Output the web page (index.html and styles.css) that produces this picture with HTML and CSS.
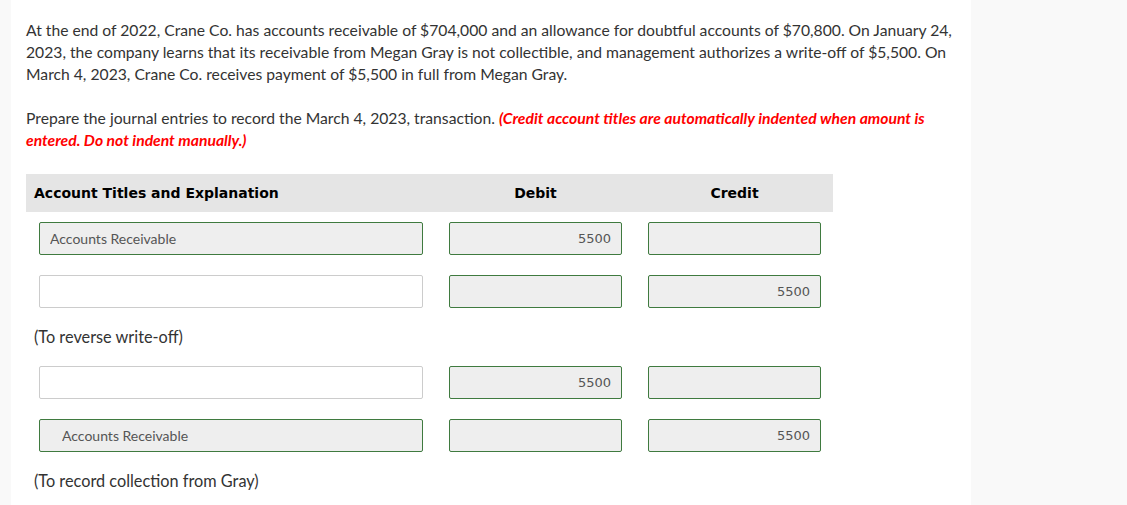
FILE: index.html
```html
<!DOCTYPE html>
<html>
<head>
<meta charset="utf-8">
<link rel="stylesheet" href="styles.css">
</head>
<body>
<div class="page">
  <div class="side-left"></div>
  <main class="content">
    <p class="intro">At the end of 2022, Crane Co. has accounts receivable of $704,000 and an allowance for doubtful accounts of $70,800. On January 24, 2023, the company learns that its receivable from Megan Gray is not collectible, and management authorizes a write-off of $5,500. On March 4, 2023, Crane Co. receives payment of $5,500 in full from Megan Gray.</p>
    <p class="prompt">Prepare the journal entries to record the March 4, 2023, transaction. <em class="note">(Credit account titles are automatically indented when amount is entered. Do not indent manually.)</em></p>

    <div class="journal">
      <div class="head row">
        <div class="h-title">Account Titles and Explanation</div>
        <div class="h-num">Debit</div>
        <div class="h-num">Credit</div>
      </div>

      <div class="row entry">
        <input class="box acct filled" value="Accounts Receivable" readonly>
        <input class="box num filled" value="5500" readonly>
        <input class="box num filled" value="" readonly>
      </div>
      <div class="row entry">
        <input class="box acct" value="" readonly>
        <input class="box num filled" value="" readonly>
        <input class="box num filled" value="5500" readonly>
      </div>
      <div class="expl">(To reverse write-off)</div>

      <div class="row entry">
        <input class="box acct" value="" readonly>
        <input class="box num filled" value="5500" readonly>
        <input class="box num filled" value="" readonly>
      </div>
      <div class="row entry">
        <input class="box acct filled credit" value="Accounts Receivable" readonly>
        <input class="box num filled" value="" readonly>
        <input class="box num filled" value="5500" readonly>
      </div>
      <div class="expl">(To record collection from Gray)</div>
    </div>
  </main>
  <div class="side-right"></div>
</div>
</body>
</html>
```

FILE: styles.css
```css
html, body {
  margin: 0;
  padding: 0;
  background: #f9f9f9;
}
.page {
  display: flex;
  min-height: 505px;
}
.side-left {
  width: 11px;
  flex: none;
  background: #f9f9f9;
}
.side-right {
  flex: 1;
  background: #f9f9f9;
}
.content {
  width: 960px;
  flex: none;
  background: #ffffff;
  padding: 19px 0 0 15px;
  box-sizing: border-box;
  font-family: Lato, "Liberation Sans", sans-serif;
  color: #333333;
}
.intro, .prompt {
  margin: 0;
  font-size: 15.7px;
  line-height: 22px;
  width: 940px;
}
.prompt {
  margin-top: 22px;
}
.note {
  color: #ff0000;
  font-weight: 700;
  font-style: italic;
}
.journal {
  margin-top: 23px;
  width: 807px;
}
.row {
  display: grid;
  grid-template-columns: 384px 173px 173px;
  column-gap: 26px;
}
.head {
  background: #e5e5e5;
  height: 38px;
  align-items: center;
  padding-left: 8px;
  grid-template-columns: 389px 173px 173px;
  font-family: "DejaVu Sans", Verdana, sans-serif;
  font-size: 14px;
  font-weight: 700;
  color: #000000;
}
.h-num {
  text-align: center;
}
.entry {
  padding-left: 13px;
  margin-top: 20px;
}
.head + .entry {
  margin-top: 10px;
}
.expl + .entry {
  margin-top: 0;
}
.box {
  display: block;
  box-sizing: border-box;
  width: 100%;
  height: 33px;
  margin: 0;
  border: 1px solid #cccccc;
  border-radius: 2px;
  background: #ffffff;
  outline: none;
}
.box.filled {
  background: #eeeeee;
  border-color: #3f7a3f;
}
.acct {
  font-family: Lato, "Liberation Sans", sans-serif;
  font-size: 14px;
  color: #555555;
  padding: 0 10px;
}
.acct.credit {
  padding-left: 22px;
}
.num {
  font-family: "DejaVu Sans", Verdana, sans-serif;
  font-size: 13px;
  color: #555555;
  text-align: right;
  padding: 0 10px;
}
.expl {
  padding-left: 8px;
  margin: 17px 0;
  font-size: 16.3px;
  line-height: 24px;
  color: #333333;
}
```
